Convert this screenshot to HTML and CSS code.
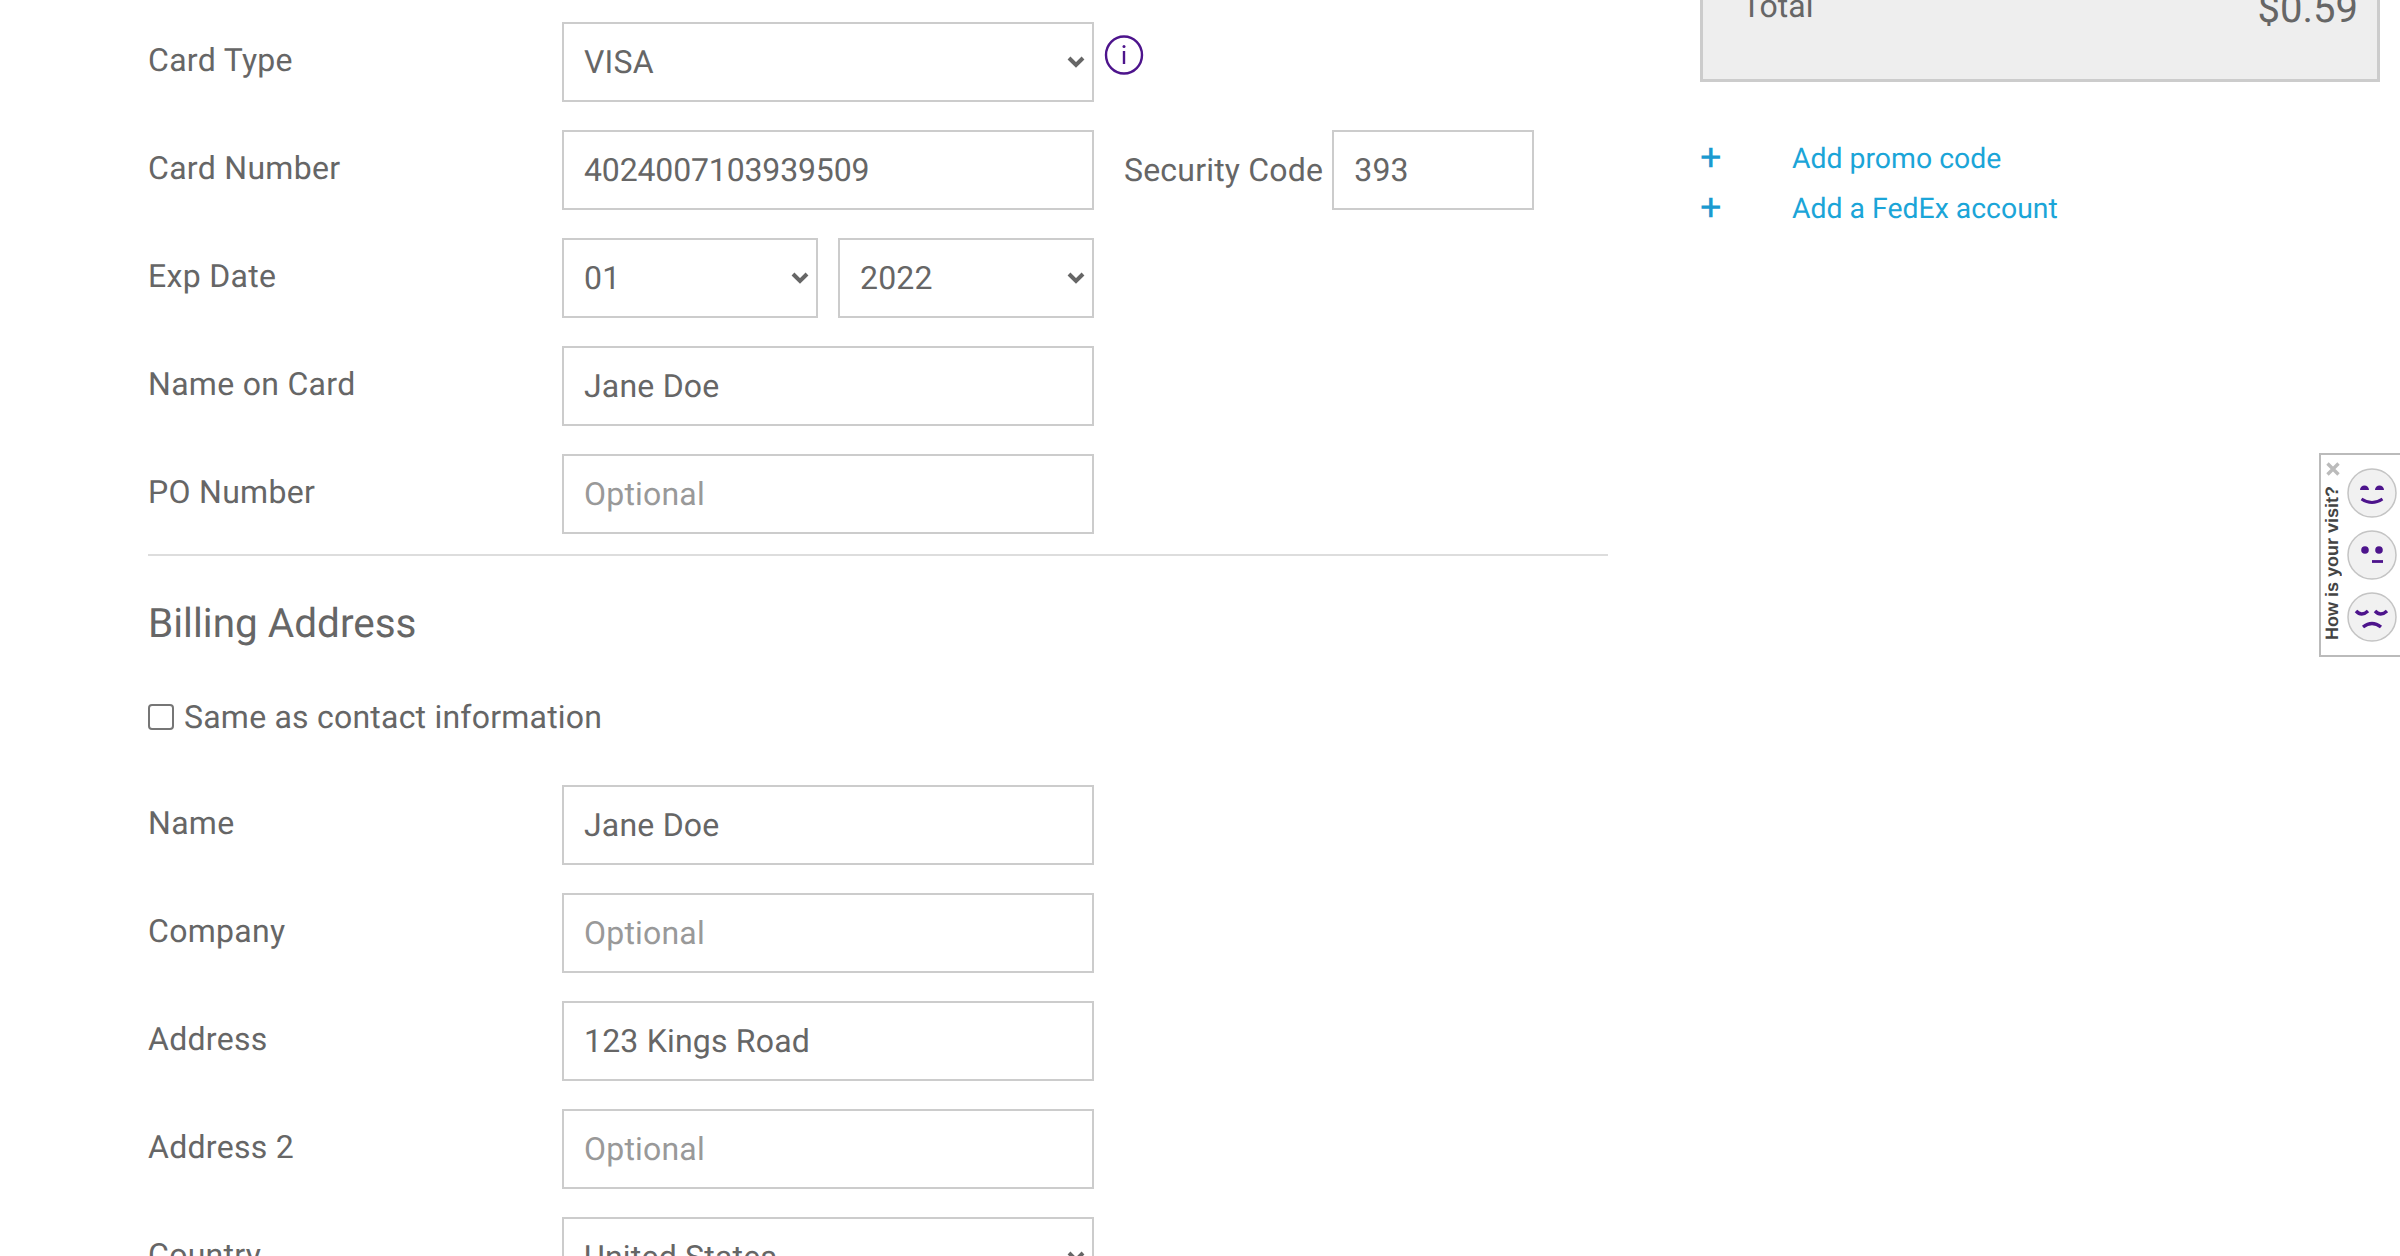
FILE: index.html
```html
<!DOCTYPE html>
<html lang="en">
<head>
    <meta charset="UTF-8">
    <title>Payment</title>
    <link rel="stylesheet" href="styles.css">
</head>
<body>
    <div class="page">
        <form class="checkout">
            <div class="row">
                <label class="label">Card Type</label>
                <select class="field">
                    <option>VISA</option>
                </select>
                <svg class="info" width="40" height="40" viewBox="0 0 40 40">
                    <ellipse cx="20" cy="20" rx="18" ry="18.5" fill="none" stroke="#4d148c" stroke-width="2.4"/>
                    <circle cx="20" cy="11.5" r="1.5" fill="#4d148c"/>
                    <path d="M20 16v13" stroke="#4d148c" stroke-width="2.4"/>
                </svg>
            </div>
            <div class="row">
                <label class="label">Card Number</label>
                <input class="field field-digits" type="text" value="4024007103939509">
                <label class="label-inline">Security Code</label>
                <input class="field field-code" type="text" value="393">
            </div>
            <div class="row">
                <label class="label">Exp Date</label>
                <div class="date-group">
                    <select class="field field-half">
                        <option>01</option>
                    </select>
                    <select class="field field-half">
                        <option>2022</option>
                    </select>
                </div>
            </div>
            <div class="row">
                <label class="label">Name on Card</label>
                <input class="field" type="text" value="Jane Doe">
            </div>
            <div class="row">
                <label class="label">PO Number</label>
                <input class="field" type="text" placeholder="Optional">
            </div>

            <hr class="divider">
            <h2 class="section-title">Billing Address</h2>
            <label class="same-as">
                <input class="check" type="checkbox">
                Same as contact information
            </label>

            <div class="row">
                <label class="label">Name</label>
                <input class="field" type="text" value="Jane Doe">
            </div>
            <div class="row">
                <label class="label">Company</label>
                <input class="field" type="text" placeholder="Optional">
            </div>
            <div class="row">
                <label class="label">Address</label>
                <input class="field" type="text" value="123 Kings Road">
            </div>
            <div class="row">
                <label class="label">Address 2</label>
                <input class="field" type="text" placeholder="Optional">
            </div>
            <div class="row">
                <label class="label">Country</label>
                <select class="field">
                    <option>United States</option>
                </select>
            </div>
        </form>

        <aside class="sidebar">
            <div class="summary">
                <span>Total</span>
                <span class="summary-price">$0.59</span>
            </div>
            <ul class="extras">
                <li><span class="plus">+</span><a href="#">Add promo code</a></li>
                <li><span class="plus">+</span><a href="#">Add a FedEx account</a></li>
            </ul>
        </aside>
    </div>

    <div class="feedback">
        <div class="feedback-side">
            <svg class="feedback-close" width="14" height="14" viewBox="0 0 14 14">
                <path d="M1.500 1.500l11 11M12.500 1.500l-11 11" stroke="#bbb" stroke-width="3.400"/>
            </svg>
            <span class="feedback-text">How is your visit?</span>
        </div>
        <div class="faces">
            <svg class="face" width="50" height="50" viewBox="0 0 50 50">
                <circle cx="25" cy="25" r="24" fill="#f1f1f1" stroke="#c4c4c4" stroke-width="1.5"/>
                <path d="M13 22a4.5 4.5 0 0 1 9 0zM28 22a4.5 4.5 0 0 1 9 0z" fill="#4d148c"/>
                <path d="M14.500 31q10.500 7 21 0" fill="none" stroke="#4d148c" stroke-width="2.800"/>
            </svg>
            <svg class="face" width="50" height="50" viewBox="0 0 50 50">
                <circle cx="25" cy="25" r="24" fill="#f1f1f1" stroke="#c4c4c4" stroke-width="1.5"/>
                <circle cx="18" cy="20" r="3.800" fill="#4d148c"/>
                <circle cx="32" cy="20" r="3.800" fill="#4d148c"/>
                <path d="M25 31.500h11" stroke="#4d148c" stroke-width="2.800"/>
            </svg>
            <svg class="face" width="50" height="50" viewBox="0 0 50 50">
                <circle cx="25" cy="25" r="24" fill="#f1f1f1" stroke="#c4c4c4" stroke-width="1.5"/>
                <path d="M9 19q5.500 6 12 0M28 19q5.500 6 12 0" fill="none" stroke="#4d148c" stroke-width="3.400"/>
                <path d="M16 35q9-7 18 0" fill="none" stroke="#4d148c" stroke-width="3.400"/>
            </svg>
        </div>
    </div>
</body>
</html>
```

FILE: styles.css
```css
html, body {
    margin: 0;
    height: 100%;
    overflow: hidden;
}

body {
    font-family: 'Roboto', sans-serif;
    color: #666;
    background-color: #fff;
    text-rendering: geometricPrecision;
}

.page {
    display: flex;
    align-items: flex-start;
    padding-left: 148px;
}

.checkout {
    width: 1460px;
    padding-top: 22px;
    flex-shrink: 0;
}

.row {
    display: flex;
    align-items: center;
    height: 80px;
    margin-bottom: 28px;
}

.label {
    width: 414px;
    flex-shrink: 0;
    font-size: 32px;
    letter-spacing: 0.3px;
    padding-bottom: 4px;
}

.label-inline {
    margin: 0 9px 0 30px;
    font-size: 32px;
    letter-spacing: 0.2px;
}

.field {
    box-sizing: border-box;
    width: 532px;
    height: 80px;
    padding: 0 20px;
    border: 2px solid #ccc;
    border-radius: 0;
    background-color: #fff;
    font-family: inherit;
    font-size: 32px;
    letter-spacing: 0.2px;
    text-rendering: geometricPrecision;
    color: #666;
    outline: none;
}

.field::placeholder {
    color: #999;
}

.field-digits {
    letter-spacing: -0.15px;
}

select.field {
    appearance: none;
    background-image: url("data:image/svg+xml,%3Csvg xmlns='http://www.w3.org/2000/svg' width='18' height='12'%3E%3Cpath d='M2 2l7 7 7-7' fill='none' stroke='%23666' stroke-width='4'/%3E%3C/svg%3E");
    background-repeat: no-repeat;
    background-position: right 7px center;
}

.field-code {
    width: 202px;
}

.field-half {
    width: 256px;
}

.date-group {
    display: flex;
    gap: 20px;
}

.info {
    margin: 13px 0 0 10px;
    align-self: flex-start;
}

.divider {
    height: 2px;
    margin: -8px 0 0;
    border: none;
    background-color: #ddd;
}

.section-title {
    margin: 42px 0 0;
    font-size: 40.5px;
    line-height: 50px;
    font-weight: 400;
}

.same-as {
    display: flex;
    align-items: center;
    gap: 10px;
    margin: 49px 0 48px;
    font-size: 32px;
    letter-spacing: 0.22px;
    line-height: 40px;
}

.check {
    appearance: none;
    box-sizing: border-box;
    width: 26px;
    height: 26px;
    margin: 0;
    border: 2px solid #767676;
    border-radius: 4px;
    background-color: #fff;
}

.sidebar {
    width: 680px;
    margin-left: 92px;
}

.summary {
    box-sizing: border-box;
    display: flex;
    justify-content: space-between;
    height: 142px;
    margin-top: -60px;
    padding: 44px 19px 0 39px;
    border: 3px solid #ccc;
    background-color: #eee;
    font-size: 32px;
}

.summary-price {
    font-size: 40px;
    line-height: 44px;
}

.extras {
    margin: 51px 0 0;
    padding: 0;
    list-style: none;
    font-size: 28.4px;
}

.extras li {
    display: flex;
    align-items: center;
    height: 50px;
}

.extras a {
    color: #1ba5d8;
    text-decoration: none;
}

.plus {
    width: 92px;
    font-size: 38px;
    color: #1b9ad0;
}

/* feedback tab stuck to the right edge */
.feedback {
    position: fixed;
    top: 453px;
    right: 0;
    box-sizing: border-box;
    display: flex;
    width: 81px;
    height: 204px;
    border: 2px solid #bbb;
    border-right: none;
    background-color: #fff;
}

.feedback-side {
    display: flex;
    flex-direction: column;
    align-items: center;
    width: 24px;
    padding-top: 7px;
}

.feedback-close {
    flex-shrink: 0;
}

.feedback-text {
    margin-top: 10px;
    margin-right: 2px;
    writing-mode: vertical-rl;
    transform: rotate(180deg);
    font-family: 'Liberation Sans', sans-serif;
    font-size: 18px;
    font-weight: 700;
    color: #444;
}

.faces {
    display: flex;
    flex-direction: column;
    gap: 12px;
    padding: 13px 0 0 2px;
}

.face {
    display: block;
}
```
